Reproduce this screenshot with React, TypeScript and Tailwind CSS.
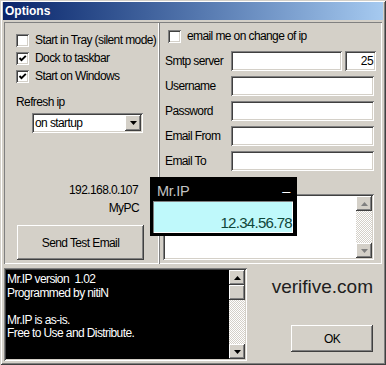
import React from "react";

const sunken =
  "shadow-[inset_1px_1px_0_#808080,inset_-1px_-1px_0_#ffffff,inset_2px_2px_0_#404040,inset_-2px_-2px_0_#d4d0c8]";
const raised =
  "shadow-[inset_-1px_-1px_0_#404040,inset_1px_1px_0_#ffffff,inset_-2px_-2px_0_#808080,inset_2px_2px_0_#d4d0c8]";

function Check({ on }: { on?: boolean }) {
  return (
    <span className={`w-[13px] h-[13px] bg-white shrink-0 flex items-center justify-center ${sunken}`}>
      {on && (
        <svg width="9" height="9" viewBox="0 0 9 9">
          <path d="M1.5 4 L3.5 6.2 L7.8 1.8" fill="none" stroke="#000" strokeWidth="1.9" />
        </svg>
      )}
    </span>
  );
}

function Arrow({ dir, color = "#000" }: { dir: "up" | "down"; color?: string }) {
  return (
    <svg width="7" height="4" viewBox="0 0 7 4">
      <path d={dir === "up" ? "M3.5 0 L7 4 L0 4 Z" : "M0 0 L7 0 L3.5 4 Z"} fill={color} />
    </svg>
  );
}

function ScrollBtn({ dir, color }: { dir: "up" | "down"; color?: string }) {
  return (
    <div className={`w-[16px] h-[15px] bg-[#d4d0c8] flex items-center justify-center shrink-0 ${raised}`}>
      <Arrow dir={dir} color={color} />
    </div>
  );
}

const track =
  "bg-[repeating-conic-gradient(#d4d0c8_0_25%,#ffffff_0_50%)] bg-[length:2px_2px]";

function Field({ label, wide = true, children }: { label: string; wide?: boolean; children?: React.ReactNode }) {
  return (
    <div className="flex items-center h-[20px]">
      <span className="w-[66px] shrink-0 whitespace-nowrap">{label}</span>
      {wide ? <div className={`w-[143px] h-[20px] bg-white ${sunken}`} /> : children}
    </div>
  );
}

export default function App() {
  return (
    <div className="relative w-[386px] h-[365px] overflow-hidden bg-[#d4d0c8] pt-[2px] px-[3px] text-[12px] tracking-[-0.6px] leading-[16px] text-black font-['Liberation_Sans',sans-serif] shadow-[inset_1px_1px_0_#d4d0c8,inset_-1px_-1px_0_#404040,inset_2px_2px_0_#ffffff,inset_-2px_-2px_0_#808080]">
      {/* title bar */}
      <div className="h-[18px] bg-gradient-to-r from-[#0a246a] to-[#a6caf0] pl-[2px] text-white font-bold text-[12px] tracking-normal leading-[18px]">
        Options
      </div>

      <div className="flex mt-[2px] ml-[1px] h-[242px]">
        {/* left panel */}
        <div className="w-[155px] h-full shadow-[inset_1px_1px_0_#808080,inset_-1px_-1px_0_#ffffff] pt-[9px] pl-[12px]">
          {[
            ["Start in Tray (silent mode)", false],
            ["Dock to taskbar", true],
            ["Start on Windows", true],
          ].map(([t, on]) => (
            <div key={t as string} className="flex items-center gap-[6px] h-[18px] whitespace-nowrap">
              <Check on={on as boolean} />
              <span>{t}</span>
            </div>
          ))}
          <div className="mt-[9px]">Refresh ip</div>
          <div className={`mt-[3px] ml-[16px] w-[111px] h-[20px] bg-white flex items-center justify-between pl-[3px] pr-[2px] ${sunken}`}>
            <span>on startup</span>
            <div className={`w-[16px] h-[16px] bg-[#d4d0c8] flex items-center justify-center ${raised}`}>
              <Arrow dir="down" />
            </div>
          </div>
          <div className="mt-[49px] w-[122px] text-right">192.168.0.107</div>
          <div className="mt-[2px] w-[123px] text-right">MyPC</div>
          <button className={`mt-[9px] ml-[1px] w-[127px] h-[35px] bg-[#d4d0c8] ${raised}`}>Send Test Email</button>
        </div>

        {/* right panel */}
        <div className="w-[223px] h-full shadow-[inset_1px_1px_0_#808080,inset_-1px_-1px_0_#ffffff] pt-[5px] pl-[6px]">
          <div className="flex items-center gap-[6px] h-[18px] pl-[3px] whitespace-nowrap">
            <Check />
            <span>email me on change of ip</span>
          </div>
          <div className="mt-[6px] flex flex-col gap-[5px]">
            <Field label="Smtp server" wide={false}>
              <div className={`w-[111px] h-[20px] bg-white ${sunken}`} />
              <div className={`ml-[3px] w-[31px] h-[20px] bg-white text-right pr-[3px] leading-[20px] ${sunken}`}>25</div>
            </Field>
            <Field label="Username" />
            <Field label="Password" />
            <Field label="Email From" />
            <Field label="Email To" />
          </div>
          <div className={`mt-[23px] ml-[-2px] w-[211px] h-[66px] bg-white p-[2px] flex justify-end ${sunken}`}>
            <div className={`w-[16px] h-full flex flex-col ${track}`}>
              <ScrollBtn dir="up" color="#808080" />
              <div className="flex-1" />
              <ScrollBtn dir="down" color="#808080" />
            </div>
          </div>
        </div>
      </div>

      <div className="flex mt-[4px] ml-[1px]">
        {/* about memo */}
        <div className={`w-[243px] h-[93px] bg-black p-[2px] flex ${sunken}`}>
          <div className="flex-1 pl-[1px] pt-[3px] text-white leading-[13.5px] whitespace-nowrap">
            <div>Mr.IP version&nbsp;&nbsp;1.02</div>
            <div>Programmed by nitiN</div>
            <div>&nbsp;</div>
            <div>Mr.IP is as-is.</div>
            <div>Free to Use and Distribute.</div>
          </div>
          <div className={`w-[16px] h-full flex flex-col ${track}`}>
            <ScrollBtn dir="up" />
            <div className={`w-[16px] h-[15px] bg-[#d4d0c8] ${raised}`} />
            <div className="flex-1" />
            <ScrollBtn dir="down" />
          </div>
        </div>
        <div className="flex-1 flex flex-col items-end pr-[10px]">
          <div className="mt-[9px] text-[19px] leading-[20px] tracking-normal text-[#202020]">
            verifive.com
          </div>
          <button className={`mt-[28px] w-[82px] h-[27px] bg-[#d4d0c8] ${raised}`}>OK</button>
        </div>
      </div>

      {/* Mr.IP floating window */}
      <div className="absolute left-[150px] top-[177px] w-[147px] h-[59px] bg-black px-[3px] pt-[5px]">
        <div className="flex justify-between items-center h-[17px] pl-[4px] pr-[4px] text-[#c4c4c4] text-[14.5px] tracking-[-0.3px]">
          <span>Mr.IP</span>
          <span className="text-white">–</span>
        </div>
        <div className="mt-[2px] w-[140px] h-[32px] bg-[#bff9fb] shadow-[inset_1px_1px_0_#808080,inset_-1px_-1px_0_#ffffff] flex items-end justify-end pr-[1px] pb-[2px] text-[15px] leading-[16px] tracking-[-0.7px] text-[#10473a]">
          12.34.56.78
        </div>
      </div>
    </div>
  );
}
